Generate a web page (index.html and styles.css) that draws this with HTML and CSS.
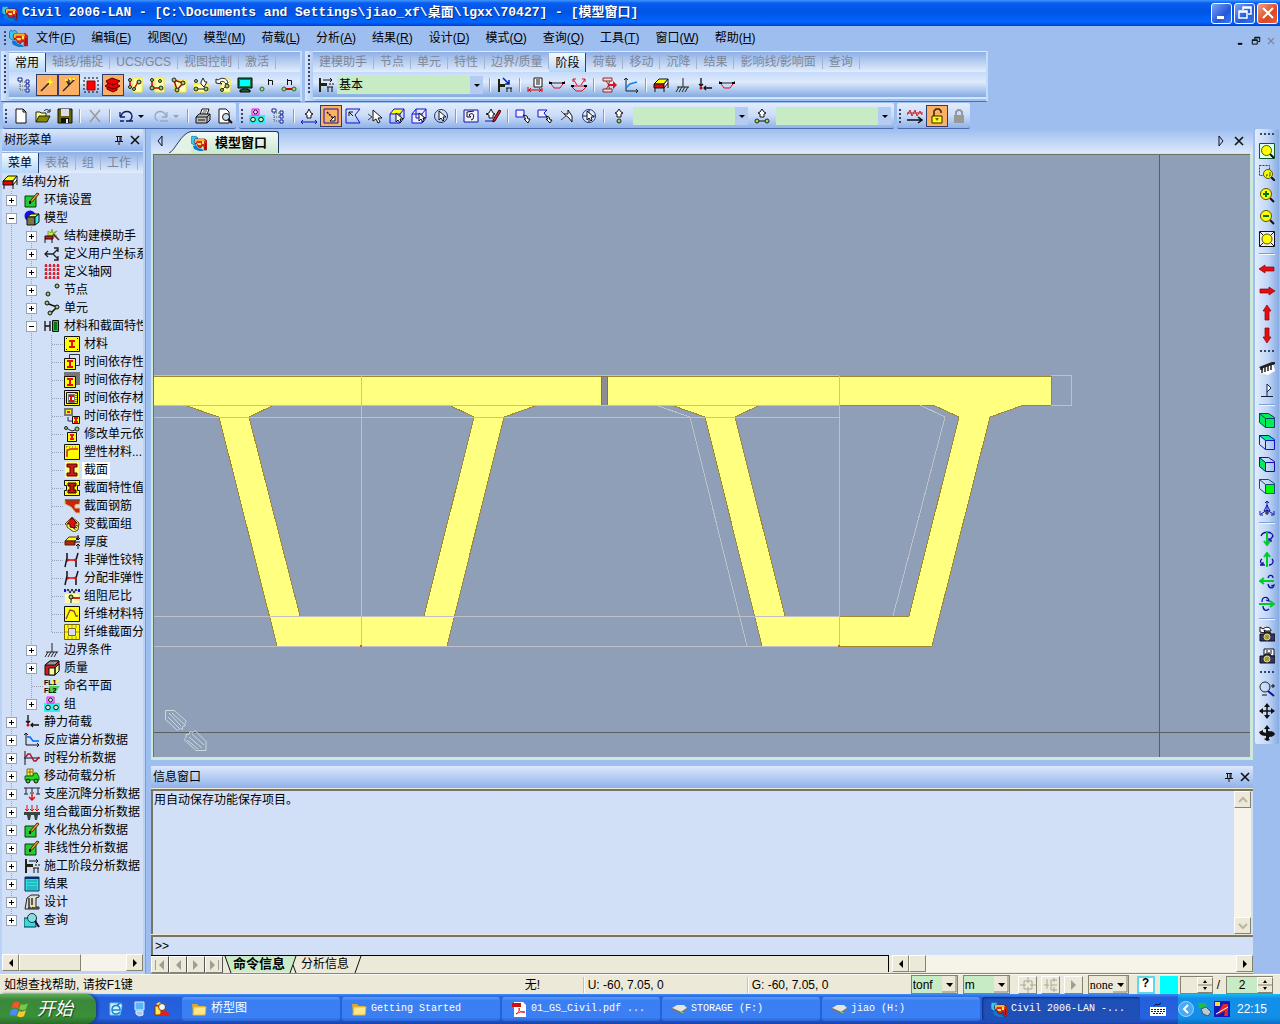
FILE: index.html
```html
<!DOCTYPE html>
<html lang="zh-CN">
<head>
<meta charset="UTF-8">
<meta name="viewport" content="width=device-width, initial-scale=1.0">
<title>Civil 2006-LAN</title>
<link rel="stylesheet" href="styles.css">
</head>
<body>

<!-- Icon sprite, every symbol is on a 16 x 16 grid -->
<svg class="sprite" aria-hidden="true">
    <symbol id="app" viewBox="0 0 16 16"><path d="M1 1l2 1 1-1 2 1 1 2H4L3 7l2 2-2 1-3-2V3z" fill="#38c8f0" stroke="#0858a0" stroke-width=".6"/><path d="M4 4h10l2 2v9h-3v-4h-2l-1 2-3-1-1-3H4z" fill="#e02818" stroke="#701010" stroke-width=".6"/><path d="M4 4h9l1 2H6L5 8H4z" fill="#ffb020"/><path d="M6 8h4v2H7zM11 6h2v3h-2z" fill="#ffe060"/><path d="M2 11l3-1 2 3 4 1 2 2H8l-5-2z" fill="#1078c8"/><path d="M14 8h1v6h-1z" fill="#701010"/></symbol>
    <symbol id="tree" viewBox="0 0 16 16"><path d="M3 5v8h6M3 5h6M3 9h6" fill="none" stroke="#555" stroke-dasharray="1 1"/><path d="M1 1h4v3H1zM9 3h3v3H9zM9 7h3v3H9zM9 12h3v3H9z" fill="#fff" stroke="#0a1e96"/></symbol>
    <symbol id="wand" viewBox="0 0 16 16"><path d="M2 14l9-9" stroke="#222" stroke-width="1.5"/><path d="M11 1l1 3 3 1-3 1-1 3-1-3-3-1 3-1z" fill="#ff0"/></symbol>
    <symbol id="wand2" viewBox="0 0 16 16"><path d="M2 14l7-7 5-5M8 8L5 3M8 8V2" stroke="#222" fill="none" stroke-width="1.3"/><path d="M4 2h2v2H4zM8 1h2v2H8zM12 1h2v2h-2z" fill="#ff0"/></symbol>
    <symbol id="selall" viewBox="0 0 16 16"><path d="M4 4h8v9H4z" fill="#f00" stroke="#900"/><path d="M1 1h14v14H1z" fill="none" stroke="#000" stroke-dasharray="2 2"/></symbol>
    <symbol id="redbox" viewBox="0 0 16 16"><path d="M1 4l6-3 8 3-3 2v1l3 2-3 2v2l-4 2-6-3v-2l-2-1 3-2z" fill="#e00" stroke="#500"/><path d="M3 6l5 2 5-2M3 10l5 2 5-2" fill="none" stroke="#500"/></symbol>
    <symbol id="n1" viewBox="0 0 16 16"><path d="M6 1h9v14H6z" fill="#ffffb0" stroke="#fe0"/><path d="M3 3v6M11 5l-4 7" stroke="#d00" stroke-width="1.5"/><g fill="#9c6" stroke="#222"><circle cx="3" cy="3" r="1.5"/><circle cx="3" cy="10" r="1.5"/><circle cx="12" cy="5" r="2"/><circle cx="7" cy="12" r="1.5"/></g></symbol>
    <symbol id="n2" viewBox="0 0 16 16"><path d="M6 1h9v14H6z" fill="#ffffb0" stroke="#fe0"/><path d="M3 3v8h9" stroke="#d00" fill="none" stroke-width="1.5"/><g fill="#9c6" stroke="#222"><circle cx="3" cy="3" r="1.5"/><circle cx="3" cy="11" r="2"/><circle cx="12" cy="11" r="2"/><circle cx="11" cy="4" r="1.5"/></g></symbol>
    <symbol id="n3" viewBox="0 0 16 16"><path d="M4 3h11v12H4z" fill="#ffffb0" stroke="#fe0"/><path d="M3 3l9 3-6 7z" stroke="#b00" fill="none" stroke-width="1.5"/><g fill="#9c6" stroke="#222"><circle cx="3" cy="3" r="2"/><circle cx="12" cy="6" r="2"/><circle cx="6" cy="13" r="2"/></g></symbol>
    <symbol id="n4" viewBox="0 0 16 16"><path d="M1 7h14v8H1z" fill="#ffffb0" stroke="#fe0"/><path d="M8 7V5l2-4 2 4h2l-3 5-3-3zM4 12h8" fill="#fff" stroke="#222"/><g fill="#9c6" stroke="#222"><circle cx="3" cy="4" r="1.5"/><circle cx="3" cy="12" r="2"/><circle cx="13" cy="12" r="2"/></g></symbol>
    <symbol id="n5" viewBox="0 0 16 16"><path d="M6 2h9v13H6z" fill="#ffffb0" stroke="#fe0"/><path d="M1 6V2l2 1c4-3 9-2 10 3l-2 1C9 4 7 4 5 5l2 2z" fill="#fff" stroke="#222"/><path d="M7 13l5-5" stroke="#d00"/><g fill="#9c6" stroke="#222"><circle cx="7" cy="13" r="1.5"/><circle cx="12" cy="9" r="2"/></g></symbol>
    <symbol id="monitor" viewBox="0 0 16 16"><path d="M1 1h14v10H1z" fill="#084" stroke="#000"/><path d="M3 3h10v6H3z" fill="#0ff"/><path d="M5 12h6v1h2v2H3v-2h2z" fill="#263" stroke="#000"/></symbol>
    <symbol id="nnum" viewBox="0 0 16 16"><circle cx="3" cy="12" r="2" fill="#ad6" stroke="#263"/><path d="M9.500 8V2m0 1.500h4V8" fill="none" stroke="#111"/></symbol>
    <symbol id="enum" viewBox="0 0 16 16"><path d="M3 12h10" stroke="#d00" stroke-width="2"/><g fill="#ad6" stroke="#263"><circle cx="3" cy="12" r="2"/><circle cx="13" cy="12" r="2"/></g><path d="M6.500 8V2m0 1.500h4V8" fill="none" stroke="#111"/></symbol>
    <symbol id="stage" viewBox="0 0 16 16"><path d="M1 1h2v14H1zM3 6h6v3H3z" fill="#221"/><path d="M5 3h9m-2-2l2 2-2 2M9 10h6M10 10v5M14 10v5M12 6v2M15 6v2" fill="none" stroke="#111"/></symbol>
    <symbol id="stage2" viewBox="0 0 16 16"><path d="M1 2h2v13H1zM3 7h5v3H3z" fill="#221"/><path d="M9 11h6M10 11v4M14 11v4" fill="none" stroke="#111"/><path d="M6 1l6 6m0-4v4H8" stroke="#02a" fill="none" stroke-width="1.5"/></symbol>
    <symbol id="s1" viewBox="0 0 16 16"><path d="M7 1h8v9H7zM9 3h4M9 5h4M9 7h4" fill="#fff" stroke="#111"/><path d="M1 10v5M15 11v4M1 13h14M4 11l-2 2 2 2M12 11l2 2-2 2" fill="none" stroke="#d00"/></symbol>
    <symbol id="s2" viewBox="0 0 16 16"><path d="M0 6h16" stroke="#222"/><path d="M0 4l5 7h6l5-7" stroke="#e01020" fill="none"/><path d="M0 5h3v2H0zM13 5h3v2h-3z"/></symbol>
    <symbol id="s3" viewBox="0 0 16 16"><path d="M0 9h16M0 9l5 5h6l5-5M6 8L2 2m0 3V2h3M10 8l4-6m-3 0h3v3" stroke="#e01020" fill="none"/><path d="M0 8h3v2H0zM13 8h3v2h-3z"/></symbol>
    <symbol id="s4" viewBox="0 0 16 16"><path d="M2 1h9v3H2zM2 12h9v3H2zM5 4l3 4-3 4M9 4L7 8l2 4" fill="#edd" stroke="#922"/><path d="M8 7h4V4l4 4-4 4V9H8z" fill="#e01020"/></symbol>
    <symbol id="s5" viewBox="0 0 16 16"><path d="M3 1v13h12M1 3l2-2 2 2M13 12l2 2-2 2" fill="none" stroke="#123"/><path d="M3 11l4-4 7-2" fill="none" stroke="#08f" stroke-width="1.5"/></symbol>
    <symbol id="struct" viewBox="0 0 16 16"><path d="M1 7l5-5h9l-4 5z" fill="#ff0" stroke="#111"/><path d="M1 7h10v4H1z" fill="#e00" stroke="#111"/><path d="M11 7l4-5v4l-4 5zM2 11v4M11 11v4M15 6v5" fill="#fff" stroke="#111"/></symbol>
    <symbol id="support" viewBox="0 0 16 16"><path d="M8 1v9M2 10h12M4 10l-3 5M7 10l-3 5M10 10l-3 5M13 10l-3 5" fill="none" stroke="#222"/></symbol>
    <symbol id="load" viewBox="0 0 16 16"><path d="M4 1v8M2 7l2 2 2-2M15 11H7m2-2l-2 2 2 2" fill="none" stroke="#111" stroke-width="1.3"/><circle cx="4" cy="11" r="1.5" fill="#d00"/></symbol>
    <symbol id="new" viewBox="0 0 16 16"><path d="M3 1h7l3 3v11H3zM10 1v3h3" fill="#fff" stroke="#111"/></symbol>
    <symbol id="open" viewBox="0 0 16 16"><path d="M1 14V4h4l1 1h5v3" fill="#ff9" stroke="#221"/><path d="M1 14l3-6h11l-3 6z" fill="#880" stroke="#221"/><path d="M9 3c2-2 4-2 5 0m1-2v3h-3" fill="none" stroke="#111"/></symbol>
    <symbol id="save" viewBox="0 0 16 16"><path d="M1 1h14v14H1z" fill="#660" stroke="#111"/><path d="M4 1h8v7H4z" fill="#dde"/><path d="M4 10h8v5H4z" fill="#111"/><path d="M9 11h2v4H9z" fill="#eee"/></symbol>
    <symbol id="del" viewBox="0 0 16 16"><path d="M3 2l10 12M13 2L3 14" stroke="#9a9a9c" stroke-width="1.5"/></symbol>
    <symbol id="undo" viewBox="0 0 16 16"><path d="M2 9V4m0 5h5M3 8c2-6 10-6 11 0 0 2-1 4-3 5M2 13h4m2 0h7" fill="none" stroke="#101860" stroke-width="1.3"/></symbol>
    <symbol id="redo" viewBox="0 0 16 16"><path d="M14 9V4m0 5H9M13 8C11 2 3 2 2 8c0 2 1 4 3 5m2 0h8" fill="none" stroke="#9aa8c0" stroke-width="1.3"/></symbol>
    <symbol id="print" viewBox="0 0 16 16"><path d="M5 7l2-6h7l-2 6" fill="#fff" stroke="#111"/><path d="M8 3h4M7 5h4" stroke="#555"/><path d="M1 9l3-3h11v6l-3 3H1z" fill="#bbb" stroke="#111"/><path d="M1 9h11v6M12 9l3-3M3 12h7" fill="none" stroke="#111"/></symbol>
    <symbol id="preview" viewBox="0 0 16 16"><path d="M2 1h7l3 3v11H2z" fill="#fff" stroke="#111"/><circle cx="9" cy="9" r="3.5" fill="#cde" stroke="#111"/><path d="M11 11l4 4" stroke="#111" stroke-width="2"/></symbol>
    <symbol id="group" viewBox="0 0 16 16"><path d="M0 7h16v9H0z" fill="#3ee"/><path d="M3 1h7v6H3z" fill="#fcf" stroke="#f0f"/><g fill="#cec" stroke="#111"><circle cx="6.5" cy="4" r="2"/><circle cx="4" cy="11.5" r="2.3"/><circle cx="12" cy="11.5" r="2.3"/></g></symbol>
    <symbol id="handx" viewBox="0 0 16 16"><path d="M6 10V7L4 6l2-1 2-4 2 4 2 1-2 1v3z" fill="#fff" stroke="#111"/><path d="M0 14h16M2 12l-2 2 2 2M14 12l2 2-2 2" fill="none" stroke="#11c"/></symbol>
    <symbol id="selwin" viewBox="0 0 16 16"><path d="M1 1h14v14H1z" fill="none" stroke="#11a"/><path d="M4 4l6 6" stroke="#111" stroke-width="1.5" stroke-dasharray="2 1"/><path d="M12 8v5H7z" fill="#fff" stroke="#111"/></symbol>
    <symbol id="selpoly" viewBox="0 0 16 16"><path d="M1 1h14l-5 6 5 8H1z" fill="none" stroke="#11c"/><path d="M4 8V4h4M4 4l4 4" fill="none" stroke="#111"/></symbol>
    <symbol id="arrow" viewBox="0 0 16 16"><path d="M1 6l4 3M1 12l4-3" stroke="#444"/><path d="M6 2v11l3-2 2 4 2-1-2-4h4z" fill="#fff" stroke="#111"/></symbol>
    <symbol id="selplane" viewBox="0 0 16 16"><path d="M1 6l4-5h10l-4 5z" fill="#ff0"/><path d="M1 6l4-5h10v9l-4 5H1zM1 6h10v9M11 6l4-5" fill="none" stroke="#11c"/><path d="M7 5v9l2-2 2 3 1-1-1-3h3z" fill="#fff" stroke="#111"/></symbol>
    <symbol id="selvol" viewBox="0 0 16 16"><path d="M1 6l4-5h10v9l-4 5H1zM1 6h10v9M11 6l4-5M5 1v9h10" fill="#e8eeff" stroke="#11c"/><path d="M8 5v8l2-2 2 3 1-1-1-3h2z" fill="#fff" stroke="#111"/></symbol>
    <symbol id="selcirc" viewBox="0 0 16 16"><circle cx="8" cy="8" r="6.5" fill="none" stroke="#236"/><path d="M6 3v9l2-2 2 3 1-1-1-3h3z" fill="#fff" stroke="#111"/></symbol>
    <symbol id="selprev" viewBox="0 0 16 16"><path d="M1 2h14v12H1z" fill="#eef" stroke="#11a"/><path d="M4 4v5h4L6 7c3-3 6-1 4 4l-2 1M4 4l7-1" fill="none" stroke="#111"/></symbol>
    <symbol id="redraw" viewBox="0 0 16 16"><path d="M4 10V7L1 6l3-1 2-4 2 4 2 1-2 1v3z" fill="#fff" stroke="#111"/><path d="M0 13h9" stroke="#11c"/><path d="M14 2l2 1-6 10-2 1v-2z" fill="#c22" stroke="#400"/></symbol>
    <symbol id="unwin" viewBox="0 0 16 16"><path d="M1 2h8v7H1z" fill="#eef" stroke="#11c"/><path d="M8 7l4 1 1 3h2l-2 4-4-4h2z" fill="#fff" stroke="#111"/></symbol>
    <symbol id="unpoly" viewBox="0 0 16 16"><path d="M1 2h9L7 5l3 4H1z" fill="#eef" stroke="#11c"/><path d="M9 8l3 1 1 3h2l-2 3-4-4h2z" fill="#fff" stroke="#111"/></symbol>
    <symbol id="unline" viewBox="0 0 16 16"><path d="M2 3l4 4M2 12l5-4" stroke="#444"/><path d="M5 6h4V2l4 6v6l-3-4z" fill="#fff" stroke="#111"/></symbol>
    <symbol id="uncirc" viewBox="0 0 16 16"><circle cx="8" cy="8" r="6.5" fill="#def" stroke="#236"/><path d="M2 8h12M8 2v12" stroke="#11a"/><path d="M6 3v9l2-2 2 3 1-1-1-3h3z" fill="#fff" stroke="#111"/></symbol>
    <symbol id="handn" viewBox="0 0 16 16"><path d="M6 9V6L4 5l2-1 2-3 2 3 2 1-2 1v3z" fill="#fff" stroke="#111"/><circle cx="8" cy="13" r="2" fill="#9d5" stroke="#222"/></symbol>
    <symbol id="hande" viewBox="0 0 16 16"><path d="M6 9V6L4 5l2-1 2-3 2 3 2 1-2 1v3zM3 13h10" fill="#fff" stroke="#111"/><g fill="#9d5" stroke="#222"><circle cx="3" cy="13" r="2"/><circle cx="13" cy="13" r="2"/></g></symbol>
    <symbol id="wave" viewBox="0 0 16 16"><path d="M0 7l3-5 2 6 3-6 2 6 3-5 2 4M0 5h16" fill="none" stroke="#c22"/><path d="M0 12h14m-3-3l4 3-4 3" fill="none" stroke="#111" stroke-width="1.5"/></symbol>
    <symbol id="unlock" viewBox="0 0 16 16"><path d="M5 8V3l2-2h3l2 2v2" fill="none" stroke="#321" stroke-width="1.5"/><path d="M3 8h10v7H3z" fill="#ff0" stroke="#321"/><path d="M6 10h4l-2 3z" fill="#760"/></symbol>
    <symbol id="lock" viewBox="0 0 16 16"><path d="M5 7V4l2-2h2l2 2v3" fill="none" stroke="#999" stroke-width="2"/><path d="M3 7h10v8H3z" fill="#999"/></symbol>

    <symbol id="env" viewBox="0 0 16 16"><path d="M1 4h11v11H1z" fill="#2c3" stroke="#131"/><path d="M6 11l1-3 6-7 2 1-6 7z" fill="#f92" stroke="#430"/><path d="M5 9h2v3H5z"/></symbol>
    <symbol id="model" viewBox="0 0 16 16"><circle cx="6" cy="6" r="5.5" fill="#11e"/><path d="M3 7l4-3h8l-4 3z" fill="#ff3" stroke="#111"/><path d="M3 7h8v8H3z" fill="#774" stroke="#111"/><path d="M11 7l4-3v8l-4 3z" fill="#4ee" stroke="#111"/></symbol>
    <symbol id="wizard" viewBox="0 0 16 16"><path d="M4 3l3 2 1-4 1 4 4-2-3 3 3 2H4z" fill="#be4" stroke="#7a3"/><path d="M1 8h8v3H1zM1 11v4M8 11v4" fill="#e11" stroke="#111"/><path d="M9 6l6 6" stroke="#612" stroke-width="1.5"/></symbol>
    <symbol id="ucs" viewBox="0 0 16 16"><path d="M1 8h8l5-5M9 8l5 5M4 5L1 8l3 3M10 2h4v4M10 14h4v-4" fill="none" stroke="#222" stroke-width="1.3"/></symbol>
    <symbol id="grid" viewBox="0 0 16 16"><path d="M0 2h16M0 6h16M0 10h16M0 14h16" stroke="#889"/><path d="M2 0v16M6 0v16M10 0v16M14 0v16" stroke="#d23" stroke-width="2" stroke-dasharray="3 1"/></symbol>
    <symbol id="node" viewBox="0 0 16 16"><g fill="#9c7" stroke="#111"><circle cx="13" cy="4" r="2"/><circle cx="4" cy="12" r="2"/></g></symbol>
    <symbol id="elem" viewBox="0 0 16 16"><path d="M2 3l11 4-6 6" fill="none" stroke="#111" stroke-width="1.5"/><g fill="#9c7" stroke="#111"><circle cx="3" cy="3" r="2"/><circle cx="13" cy="7" r="2"/><circle cx="6" cy="13" r="2"/></g></symbol>
    <symbol id="prop" viewBox="0 0 16 16"><path d="M1 3v10M6 3v10M1 8h5" stroke="#111" stroke-width="1.3"/><path d="M8.500 2.500h6v11h-6z" fill="#1c3" stroke="#111"/><path d="M10 5h3M10 7h3M10 9h3M10 11h3" stroke="#020"/></symbol>
    <symbol id="mat" viewBox="0 0 16 16"><path d="M.5.5h15v15H.5z" fill="#ff0" stroke="#111"/><path d="M5 4h6v2H9v4h2v2H5v-2h2V6H5z" fill="#e01010"/><path d="M2 2h1v1H2zM13 2h1v1h-1zM2 13h1v1H2zM13 13h1v1h-1z"/></symbol>
    <symbol id="mat2" viewBox="0 0 16 16"><path d="M5.500.5h10v11h-10z" fill="#ddf" stroke="#333"/><path d="M.5 4.500h11v11H.5z" fill="#ff0" stroke="#111"/><path d="M3 6h6v2H7v4h2v2H3v-2h2V8H3z" fill="#e01010"/></symbol>
    <symbol id="mat3" viewBox="0 0 16 16"><path d="M0 0h16v13H0z" fill="#777"/><path d="M.5 4.500h11v11H.5z" fill="#ff0" stroke="#111"/><path d="M3 6h6v2H7v4h2v2H3v-2h2V8H3z" fill="#e01010"/></symbol>
    <symbol id="mat4" viewBox="0 0 16 16"><path d="M.5.5h15v15H.5z" fill="#ff0" stroke="#111"/><path d="M2.500 2.500h11v11h-11z" fill="none" stroke="#111"/><path d="M4.500 4.500h6v8h-6z" fill="#fff" stroke="#777"/><path d="M5 5h5v2H8v3h2v2H5v-2h1V7H5z" fill="#e01010"/><path d="M12 3v10" stroke="#111" stroke-dasharray="1 1"/></symbol>
    <symbol id="mat5" viewBox="0 0 16 16"><path d="M1 1h7v6H1z" fill="#ff0" stroke="#777" stroke-width="2"/><path d="M3 3h3v2H3z" fill="#e11"/><path d="M8.500 8.500h7v7h-7z" fill="#ff0" stroke="#111"/><path d="M11 10h2v4h-2zM10 9h4v2h-4zM10 13h4v2h-4z" fill="#e11"/><path d="M4 9v4h4" stroke="#226" fill="none"/></symbol>
    <symbol id="mat6" viewBox="0 0 16 16"><path d="M2 2l6 3 6-2" fill="none" stroke="#222"/><g fill="#9c7" stroke="#222"><circle cx="2" cy="2" r="1.5"/><circle cx="13" cy="3" r="2"/></g><path d="M3.500 6.500h9v9h-9z" fill="#ff0" stroke="#111"/><path d="M6 8h4v2H9v2h1v2H6v-2h1v-2H6z" fill="#e11"/></symbol>
    <symbol id="plast" viewBox="0 0 16 16"><path d="M.5.5h15v15H.5z" fill="#ff0" stroke="#111"/><path d="M3 13V7l3-2h8" fill="none" stroke="#d22" stroke-width="1.5"/><path d="M3 2v12M2 3h12" stroke="#762" stroke-dasharray="1 2"/></symbol>
    <symbol id="sect" viewBox="0 0 16 16"><path d="M1 0h14v16H1z" fill="#ff8"/><path d="M3 2h10v3h-3v6h3v3H3v-3h3V5H3z" fill="#d01818" stroke="#500"/></symbol>
    <symbol id="sect2" viewBox="0 0 16 16"><path d="M.5.5h15v5h-2v5h2v5H.5v-5h2v-5h-2z" fill="#ff0" stroke="#111"/><path d="M4 3h8v3h-2v4h2v3H4v-3h2V6H4z" fill="#c01010" stroke="#300"/></symbol>
    <symbol id="rebar" viewBox="0 0 16 16"><path d="M1 2h15v4l-5 1v3h5v5h-4L7 9 1 6z" fill="#d02010" stroke="#cc6"/><path d="M1 2h15" stroke="#400"/></symbol>
    <symbol id="taper" viewBox="0 0 16 16"><path d="M8 1l7 6-1 7-4 2-3-2-4-3v-2L1 8z" fill="#ff6" stroke="#640"/><path d="M8 2l5 5h-2v5l-5-1V8H3z" fill="#e01010" stroke="#500"/><path d="M10 13l4-5" stroke="#333" stroke-dasharray="1 1" stroke-width="3"/></symbol>
    <symbol id="thick" viewBox="0 0 16 16"><path d="M1 7l4-4h10l-4 4z" fill="#ff0" stroke="#520"/><path d="M1 7h10v4H1z" fill="#b21" stroke="#520"/><path d="M14 1v5m-2-2l2 2 2-2M14 15v-5m-2 2l2-2 2 2M10 8h6" stroke="#111" fill="none"/></symbol>
    <symbol id="hinge" viewBox="0 0 16 16"><path d="M3 1v5L1 15M14 1l-2 7v7" fill="none" stroke="#111" stroke-width="1.5"/><path d="M3 8h10" stroke="#e01010" stroke-width="1.5"/><path d="M3 6l3 2-3 2zM12 6l-3 2 3 2z" fill="#e01010"/></symbol>
    <symbol id="damp" viewBox="0 0 16 16"><path d="M1 6h14v9H1z" fill="#ffa"/><path d="M3 3l1-2 2 4 2-4 2 4 2-4 1 2" fill="none" stroke="#111"/><path d="M0 1h2v3H0zM14 1h2v3h-2z" fill="#11d"/><path d="M8 9h8v2H8z" fill="#d22"/><path d="M7 10v5" stroke="#111"/><circle cx="7" cy="9" r="2" fill="#9c7" stroke="#111"/></symbol>
    <symbol id="fib1" viewBox="0 0 16 16"><path d="M.5.5h15v15H.5z" fill="#ff0" stroke="#111"/><path d="M2 13l4-9 4 1 2 5h2" fill="none" stroke="#843" stroke-width="1.3"/></symbol>
    <symbol id="fib2" viewBox="0 0 16 16"><path d="M.5.5h15v15H.5z" fill="#ff0" stroke="#760"/><path d="M4.500 4.500h7v7h-7z" fill="#d2e0f7" stroke="#863"/><path d="M8 1v3M8 12v3M1 8h3M12 8h3M4 1v3M12 1v3M4 12v3M12 12v3" stroke="#a93"/></symbol>
    <symbol id="mass" viewBox="0 0 16 16"><path d="M1 5l5-4h9v9l-4 5H1z" fill="#d01820" stroke="#111"/><path d="M1 5l5-4h9l-4 4z" fill="#999" stroke="#111"/><path d="M5 8h6v7H5zM11 8l4-4v7l-4 4z" fill="#ef9" stroke="#111"/></symbol>
    <symbol id="spectrum" viewBox="0 0 16 16"><path d="M2 1v12h13M0 3l2-2 2 2M13 11l2 2-2 2" fill="none" stroke="#112"/><path d="M3 5h3l3 4h6" fill="none" stroke="#06f" stroke-width="1.5"/></symbol>
    <symbol id="time" viewBox="0 0 16 16"><path d="M1 1v14M0 8h16" stroke="#111"/><path d="M1 8l3-4h2l4 7h2l3-4" fill="none" stroke="#b11328" stroke-width="1.5"/></symbol>
    <symbol id="car" viewBox="0 0 16 16"><path d="M3 1h6v7H3zM6 1v6M3 4h6" fill="#fe3" stroke="#863"/><path d="M1 8h8l1-3h3l2 4v3H1z" fill="#2d2" stroke="#161"/><circle cx="4" cy="13" r="2" fill="#2d2" stroke="#111"/><circle cx="12" cy="13" r="2" fill="#2d2" stroke="#111"/></symbol>
    <symbol id="settle" viewBox="0 0 16 16"><path d="M0 2h16M2 2v6M8 2v4M14 2v6M0 8h4M6 7h4M12 8h4" stroke="#222"/><path d="M8 8v6m-3-3l3 3 3-3" fill="none" stroke="#d11" stroke-width="1.5"/></symbol>
    <symbol id="comp" viewBox="0 0 16 16"><path d="M3 1v6M8 1v6M13 1v6M1 5l2 2 2-2M6 5l2 2 2-2M11 5l2 2 2-2" fill="none" stroke="#d11"/><path d="M0 8h16v3H0zM3 11h4l-1 5H4zM10 11h4l-1 5h-2z" fill="#354540"/></symbol>
    <symbol id="result" viewBox="0 0 16 16"><path d="M1 1h14v14H1z" fill="#3dd" stroke="#036"/><path d="M1 2h14" stroke="#036" stroke-width="2"/><path d="M3 5h10M3 8h10M3 11h10M3 13h10" stroke="#178" stroke-width=".7"/></symbol>
    <symbol id="design" viewBox="0 0 16 16"><path d="M1 15l2-11 4-3h8v2l-3 1v9h3v2z" fill="#ddc" stroke="#222"/><path d="M5 4v10M8 4v10M4 14h10" stroke="#333" stroke-width="1.5"/><path d="M7 11h4l-4 3z" fill="#fe3"/></symbol>
    <symbol id="query" viewBox="0 0 16 16"><path d="M0 6h12v9H0z" fill="#3dd" stroke="#134"/><circle cx="8" cy="6" r="4.5" fill="#8dd" stroke="#134"/><path d="M11 9l4 6" stroke="#113" stroke-width="2"/></symbol>

    <symbol id="zfit" viewBox="0 0 16 16"><path d="M.5.5h15v15H.5z" fill="#dfe" stroke="#153"/><path d="M11 11l4 4" stroke="#111" stroke-width="2"/><circle cx="7.5" cy="7.5" r="5" fill="#ff0" stroke="#550"/></symbol>
    <symbol id="zwin" viewBox="0 0 16 16"><path d="M.5.5h10v10H.5z" fill="none" stroke="#153" stroke-dasharray="2 1"/><path d="M12 12l4 4" stroke="#111" stroke-width="2"/><circle cx="9" cy="9" r="4.5" fill="#ff0" stroke="#550"/><path d="M7 11h1V9m2 2h1V7" stroke="#350" fill="none"/></symbol>
    <symbol id="zin" viewBox="0 0 16 16"><path d="M11 11l4 4" stroke="#111" stroke-width="2"/><circle cx="7" cy="7" r="5.5" fill="#ff0" stroke="#550"/><path d="M4 7h6M7 4v6" stroke="#070" stroke-width="2"/></symbol>
    <symbol id="zout" viewBox="0 0 16 16"><path d="M11 11l4 4" stroke="#111" stroke-width="2"/><circle cx="7" cy="7" r="5.5" fill="#ff0" stroke="#550"/><path d="M4 7h6" stroke="#070" stroke-width="2"/></symbol>
    <symbol id="zauto" viewBox="0 0 16 16"><path d="M.5.5h15v15H.5zM1 1l14 14M15 1L1 15" fill="#eef" stroke="#111"/><circle cx="8" cy="8" r="5" fill="#ff0" stroke="#550"/></symbol>
    <symbol id="left" viewBox="0 0 16 16"><path d="M0 8l6-4v2h9v4H6v2z" fill="#e80c0c" stroke="#801" stroke-width=".7"/></symbol>
    <symbol id="right" viewBox="0 0 16 16"><path d="M16 8l-6-4v2H1v4h9v2z" fill="#e80c0c" stroke="#801" stroke-width=".7"/></symbol>
    <symbol id="up" viewBox="0 0 16 16"><path d="M8 0l4 6h-2v9H6V6H4z" fill="#e80c0c" stroke="#801" stroke-width=".7"/></symbol>
    <symbol id="down" viewBox="0 0 16 16"><path d="M8 16l4-6h-2V1H6v9H4z" fill="#e80c0c" stroke="#801" stroke-width=".7"/></symbol>
    <symbol id="bridge" viewBox="0 0 16 16"><path d="M1 8l13-5 2 8-7 4-8-2z" fill="#fff"/><path d="M0 7l13-5h3v2L2 9z" fill="#222"/><path d="M3 8v5M6 7v5M9 6v5M12 5v5M1 9h3M11 4h4" stroke="#222" stroke-width="1.5"/></symbol>
    <symbol id="flag" viewBox="0 0 16 16"><path d="M2 14.500h12M8 14V2l4 4-4 4" fill="#fff" stroke="#124"/></symbol>
    <symbol id="iso" viewBox="0 0 16 16"><path d="M.5 1.500h9l6 4v10h-9l-6-5z" fill="#0e5" stroke="#123a70"/><path d="M6.500 15V6.500h9M.5 1.500l6 5" fill="none" stroke="#123a70"/></symbol>
    <symbol id="top" viewBox="0 0 16 16"><path d="M0 1h10l6 5H6z" fill="#0e8"/><path d="M.5 1.500h9l6 4v10h-9l-6-5zM6.500 15V6.500h9M.5 1.500l6 5" fill="none" stroke="#11c"/></symbol>
    <symbol id="lside" viewBox="0 0 16 16"><path d="M0 1l6 5v9l-6-5z" fill="#0e5"/><path d="M.5 1.500h9l6 4v10h-9l-6-5zM6.500 15V6.500h9M.5 1.500l6 5" fill="none" stroke="#11a"/></symbol>
    <symbol id="front" viewBox="0 0 16 16"><path d="M6 6h10v10H6z" fill="#0f0"/><path d="M.5 1.500h9l6 4v10h-9l-6-5zM6.500 15V6.500h9M.5 1.500l6 5" fill="none" stroke="#124a80"/></symbol>
    <symbol id="persp" viewBox="0 0 16 16"><path d="M8 1v9l6 4M8 10l-6 4M6 3l2-2 2 2M8 5l3 6H5zM1 11v4h3M15 11v4h-3" fill="none" stroke="#11b"/><path d="M8 10v5M6 13h4" stroke="#111"/></symbol>
    <symbol id="rdown" viewBox="0 0 16 16"><path d="M2 6c2-5 11-5 12 0l-3 4m-1-2v3h3" fill="none" stroke="#11a" stroke-width="1.3"/><path d="M8 1v13M5 11l3 4 3-4" fill="none" stroke="#0c2" stroke-width="2"/></symbol>
    <symbol id="rup" viewBox="0 0 16 16"><path d="M3 7c-3 2-1 6 3 6M10 13c4 0 5-4 3-6M4 10v3H1" fill="none" stroke="#11a" stroke-width="1.3"/><path d="M8 15V2M5 5l3-4 3 4" fill="none" stroke="#0c2" stroke-width="2"/></symbol>
    <symbol id="rleft" viewBox="0 0 16 16"><path d="M9 4c1-4 5-3 5 0M9 10c1 5 5 5 6 1l-3 1" fill="none" stroke="#11a" stroke-width="1.3"/><path d="M15 7H2M5 4L1 7l4 3" fill="none" stroke="#0c2" stroke-width="2"/></symbol>
    <symbol id="rright" viewBox="0 0 16 16"><path d="M3 6c0-6 6-6 7-1L7 4M4 10c0 5 4 5 6 3" fill="none" stroke="#11a" stroke-width="1.3"/><path d="M0 8h13M11 5l4 3-4 3" fill="none" stroke="#0c2" stroke-width="2"/></symbol>
    <symbol id="cam" viewBox="0 0 16 16"><path d="M1 6V1l3 2c3-3 8-2 8 2H7L5 4l1 3z" fill="#fff" stroke="#111"/><path d="M1 8h4l1-2h5l1 2h4v7H1z" fill="#336" stroke="#111"/><circle cx="8" cy="11" r="3" fill="#a93" stroke="#dd8"/></symbol>
    <symbol id="cam2" viewBox="0 0 16 16"><path d="M5 1h10v7H5zM7 3h2M11 3h2M7 5h6" fill="#fff" stroke="#111"/><path d="M1 8h4l1-2h5l1 2h4v7H1z" fill="#336" stroke="#111"/><circle cx="8" cy="11" r="3" fill="#a93" stroke="#dd8"/></symbol>
    <symbol id="zdyn" viewBox="0 0 16 16"><circle cx="6" cy="6" r="5" fill="none" stroke="#222"/><path d="M9 10l6 5" stroke="#11a" stroke-width="2"/><path d="M12 5h4M14 3v4M3 14h5" stroke="#111"/></symbol>
    <symbol id="pan" viewBox="0 0 16 16"><path d="M8 1v14M1 8h14" stroke="#111" stroke-width="1.5"/><path d="M8 0l3 4H5zM8 16l3-4H5zM0 8l4-3v6zM16 8l-4-3v6z" fill="#111"/></symbol>
    <symbol id="rot" viewBox="0 0 16 16"><path d="M8 0l3 4H9v2c4 0 6 1 7 3-1 2-3 3-6 3v2l1 1-3 1-3-2 2-1v-2C4 11 1 10 0 7l4-2v2l3 1V4H5z" fill="#111"/></symbol>

    <symbol id="pin" viewBox="0 0 16 16"><path d="M5 4.500h6M6.500 4v5M9 4v5M10 4v5M4 9.500h8M8 9v4" stroke="#111" fill="none"/></symbol>
    <symbol id="x" viewBox="0 0 16 16"><path d="M4 4l8 8M12 4l-8 8" stroke="#111" stroke-width="1.6"/></symbol>
    <symbol id="min" viewBox="0 0 16 16"><path d="M3 11h7v3H3z" fill="currentColor"/></symbol>
    <symbol id="restore" viewBox="0 0 16 16"><path d="M6 5V2h8v7h-3M6 3h8M2 6h8v7H2zM2 7h8" fill="none" stroke="currentColor" stroke-width="1.5"/></symbol>
    <symbol id="close" viewBox="0 0 16 16"><path d="M3 3l10 10M13 3L3 13" stroke="currentColor" stroke-width="2"/></symbol>
    <symbol id="tl" viewBox="0 0 16 16"><path d="M10 4v8L6 8z" fill="currentColor"/></symbol>
    <symbol id="tr" viewBox="0 0 16 16"><path d="M6 4v8l4-4z" fill="currentColor"/></symbol>
    <symbol id="ol" viewBox="0 0 16 16"><path d="M10 3v10L6 8z" fill="none" stroke="#112"/></symbol>
    <symbol id="or" viewBox="0 0 16 16"><path d="M6 3v10l4-5z" fill="none" stroke="#112"/></symbol>
    <symbol id="first" viewBox="0 0 16 16"><path d="M3 3h1v10H3zM12 3v10L7 8z" fill="currentColor"/></symbol>
    <symbol id="prev" viewBox="0 0 16 16"><path d="M11 3v10L6 8z" fill="currentColor"/></symbol>
    <symbol id="next" viewBox="0 0 16 16"><path d="M5 3v10l5-5z" fill="currentColor"/></symbol>
    <symbol id="last" viewBox="0 0 16 16"><path d="M12 3h1v10h-1zM4 3v10l5-5z" fill="currentColor"/></symbol>
    <symbol id="cu" viewBox="0 0 16 16"><path d="M4 10l4-4 4 4" fill="none" stroke="#b9b6a5" stroke-width="2"/></symbol>
    <symbol id="cd" viewBox="0 0 16 16"><path d="M4 6l4 4 4-4" fill="none" stroke="#b9b6a5" stroke-width="2"/></symbol>
    <symbol id="dd" viewBox="0 0 8 16"><path d="M1 7h6L4 10z" fill="currentColor"/></symbol>
    <symbol id="target" viewBox="0 0 16 16"><path d="M4 4h8v8H4zM8 0v6M8 10v6M0 8h6M10 8h6" fill="none" stroke="#aaa797"/></symbol>
    <symbol id="snap" viewBox="0 0 16 16"><path d="M4 2v10M1 8h5M8 3v10M8 3h6M8 8h6M8 13h6M11 1v4M11 10v5" fill="none" stroke="#aaa797"/></symbol>

    <symbol id="win" viewBox="0 0 20 20"><path d="M3 4c3-2 5-1 7 0L8 10c-2-1-4-2-7 0z" fill="#f0562a"/><path d="M11 5c2 1 4 1 7-1l-2 6c-3 2-5 1-7 0z" fill="#7ac843"/><path d="M1 11c3-2 5-1 7 0l-2 6c-2-1-4-1-7 0z" fill="#4a8cf5"/><path d="M9 12c2 1 4 1 7-1l-2 6c-3 2-5 1-7 0z" fill="#fcc832"/></symbol>
    <symbol id="ie" viewBox="0 0 16 16"><path d="M2 2h11l1 3-2 9H2z" fill="#d8efff" stroke="#6bf"/><path d="M4 9h8c0-6-8-6-8 0 0 5 6 5 8 2M9 4l5-3" fill="none" stroke="#18c" stroke-width="1.5"/></symbol>
    <symbol id="desk" viewBox="0 0 16 16"><path d="M4 1h9v8H4z" fill="#5ab4f8" stroke="#def"/><path d="M5 10h7v4l-4 1-3-2z" fill="#a8c8f0" stroke="#def"/></symbol>
    <symbol id="quick" viewBox="0 0 16 16"><path d="M2 3l3-2 4 2-3 3z" fill="#fc3"/><path d="M1 5h6v9H1z" fill="#fe4" stroke="#a20"/><circle cx="8" cy="6" r="3.5" fill="#dff" stroke="#a20"/><path d="M7 12l4-3 5 4-2 2H4z" fill="#d21"/></symbol>
    <symbol id="folder" viewBox="0 0 16 16"><path d="M1 3h5l2 2h6v9H2z" fill="#d9a92c"/><path d="M3 6h12l-1 8H2z" fill="#ffe88a" stroke="#e8b93c"/></symbol>
    <symbol id="pdf" viewBox="0 0 16 16"><path d="M3 1h9l3 3v12H3z" fill="#fff"/><path d="M1 2h9v4H1z" fill="#c11"/><path d="M5 13c3-2 4-5 3-6 0 4 3 5 6 4-3-1-6 0-9 2z" fill="none" stroke="#e22"/></symbol>
    <symbol id="disk" viewBox="0 0 16 16"><path d="M1 7l5-3h7l3 3-6 4z" fill="#e4e4e0"/><path d="M1 7l9 4 6-4v2l-6 4-9-4z" fill="#777"/><path d="M10 11h3v1h-3z" fill="#5d5"/></symbol>
    <symbol id="kbd" viewBox="0 0 16 16"><path d="M0 6h16v9H0z" fill="#fff"/><path d="M1 8.500h14M1 10.500h14M3 12.500h10" stroke="#123" stroke-dasharray="2 1"/><path d="M4 5l2-2 2 1 3-2" stroke="#111" fill="none"/></symbol>
    <symbol id="chev" viewBox="0 0 16 16"><circle cx="8" cy="8" r="7.5" fill="#4aa8f4" stroke="#9ad4ff"/><path d="M10 4L6 8l4 4" fill="none" stroke="#fff" stroke-width="2"/></symbol>
    <symbol id="usb" viewBox="0 0 16 16"><path d="M2 2h7l2 3-3 3-5-1z" fill="#2b4"/><path d="M5 8l5-2 5 5-3 4-5-2z" fill="#bcc" stroke="#456"/></symbol>
    <symbol id="tray" viewBox="0 0 16 16"><path d="M0 0h16v16H0z" fill="#111ab8"/><path d="M3 14l6-11h5v12h-4l1-5z" fill="#e22"/><path d="M1 1h5v4H1z" fill="#fd3"/><path d="M2 13l12-7" stroke="#fff"/></symbol>
</svg>

<header class="titlebar">
    <svg class="icon"><use href="#app"/></svg>
    <h1>Civil 2006-LAN - [C:\Documents and Settings\jiao_xf\桌面\lgxx\70427] - [模型窗口]</h1>
    <button class="win-btn" aria-label="最小化"><svg class="icon"><use href="#min"/></svg></button>
    <button class="win-btn" aria-label="还原"><svg class="icon"><use href="#restore"/></svg></button>
    <button class="win-btn win-close" aria-label="关闭"><svg class="icon"><use href="#close"/></svg></button>
</header>

<nav class="menubar">
    <span class="grip"></span>
    <svg class="icon logo"><use href="#app"/></svg>
    <a href="#">文件(<u>F</u>)</a>
    <a href="#">编辑(<u>E</u>)</a>
    <a href="#">视图(<u>V</u>)</a>
    <a href="#">模型(<u>M</u>)</a>
    <a href="#">荷载(<u>L</u>)</a>
    <a href="#">分析(<u>A</u>)</a>
    <a href="#">结果(<u>R</u>)</a>
    <a href="#">设计(<u>D</u>)</a>
    <a href="#">模式(<u>O</u>)</a>
    <a href="#">查询(<u>Q</u>)</a>
    <a href="#">工具(<u>T</u>)</a>
    <a href="#">窗口(<u>W</u>)</a>
    <a href="#">帮助(<u>H</u>)</a>
    <div class="mdi">
        <button aria-label="最小化"><svg><use href="#min"/></svg></button>
        <button aria-label="还原"><svg><use href="#restore"/></svg></button>
        <button class="dim" aria-label="关闭"><svg><use href="#close"/></svg></button>
    </div>
</nav>

<div class="bands">
    <section class="band">
        <span class="grip tall"></span>
        <div class="band-body">
            <div class="tabs">
                <button class="tab on">常用</button><button class="tab">轴线/捕捉</button><button class="tab">UCS/GCS</button><button class="tab">视图控制</button><button class="tab">激活</button>
            </div>
            <div class="tools">
                <button class="tb" aria-label="树形菜单"><svg class="icon"><use href="#tree"/></svg></button>
                <button class="tb on" aria-label="节点捕捉"><svg class="icon"><use href="#wand"/></svg></button>
                <button class="tb on" aria-label="单元捕捉"><svg class="icon"><use href="#wand2"/></svg></button>
                <button class="tb" aria-label="全选"><svg class="icon"><use href="#selall"/></svg></button>
                <button class="tb on" aria-label="消隐"><svg class="icon"><use href="#redbox"/></svg></button>
                <button class="tb" aria-label="选择节点"><svg class="icon"><use href="#n1"/></svg></button>
                <button class="tb" aria-label="选择单元"><svg class="icon"><use href="#n2"/></svg></button>
                <button class="tb" aria-label="激活"><svg class="icon"><use href="#n3"/></svg></button>
                <button class="tb" aria-label="钝化"><svg class="icon"><use href="#n4"/></svg></button>
                <button class="tb" aria-label="前次激活"><svg class="icon"><use href="#n5"/></svg></button>
                <button class="tb" aria-label="显示"><svg class="icon"><use href="#monitor"/></svg></button>
                <button class="tb" aria-label="节点号"><svg class="icon"><use href="#nnum"/></svg></button>
                <button class="tb" aria-label="单元号"><svg class="icon"><use href="#enum"/></svg></button>
            </div>
        </div>
    </section>
    <section class="band band-wide">
        <span class="grip tall"></span>
        <div class="band-body">
            <div class="tabs">
                <button class="tab">建模助手</button><button class="tab">节点</button><button class="tab">单元</button><button class="tab">特性</button><button class="tab">边界/质量</button><button class="tab on">阶段</button><button class="tab">荷载</button><button class="tab">移动</button><button class="tab">沉降</button><button class="tab">结果</button><button class="tab">影响线/影响面</button><button class="tab">查询</button>
            </div>
            <div class="tools">
                <button class="tb" aria-label="施工阶段"><svg class="icon"><use href="#stage"/></svg></button>
                <select class="combo stage-combo" aria-label="阶段"><option>基本</option></select>
                <span class="sep"></span>
                <button class="tb" aria-label="定义施工阶段"><svg class="icon"><use href="#stage2"/></svg></button>
                <span class="sep"></span>
                <button class="tb" aria-label="钢束特性"><svg class="icon"><use href="#s1"/></svg></button>
                <button class="tb" aria-label="钢束形状"><svg class="icon"><use href="#s2"/></svg></button>
                <button class="tb" aria-label="钢束预应力"><svg class="icon"><use href="#s3"/></svg></button>
                <span class="sep"></span>
                <button class="tb" aria-label="徐变"><svg class="icon"><use href="#s4"/></svg></button>
                <button class="tb" aria-label="强度发展"><svg class="icon"><use href="#s5"/></svg></button>
                <span class="sep"></span>
                <button class="tb" aria-label="结构组"><svg class="icon"><use href="#struct"/></svg></button>
                <button class="tb" aria-label="边界组"><svg class="icon"><use href="#support"/></svg></button>
                <button class="tb" aria-label="荷载组"><svg class="icon"><use href="#load"/></svg></button>
                <button class="tb" aria-label="钢束组"><svg class="icon"><use href="#s2"/></svg></button>
            </div>
        </div>
    </section>
</div>

<div class="toolrow">
    <div class="strip">
        <span class="grip"></span>
        <button class="tb" aria-label="新建"><svg class="icon"><use href="#new"/></svg></button>
        <button class="tb" aria-label="打开"><svg class="icon"><use href="#open"/></svg></button>
        <button class="tb" aria-label="保存"><svg class="icon"><use href="#save"/></svg></button>
        <span class="sep"></span>
        <button class="tb" aria-label="删除"><svg class="icon"><use href="#del"/></svg></button>
        <span class="sep"></span>
        <button class="tb split" aria-label="撤销"><svg class="icon"><use href="#undo"/></svg><svg class="drop"><use href="#dd"/></svg></button>
        <button class="tb split dim" aria-label="重做"><svg class="icon"><use href="#redo"/></svg><svg class="drop"><use href="#dd"/></svg></button>
        <span class="sep"></span>
        <button class="tb" aria-label="打印"><svg class="icon"><use href="#print"/></svg></button>
        <button class="tb" aria-label="打印预览"><svg class="icon"><use href="#preview"/></svg></button>
    </div>
    <div class="strip">
        <span class="grip"></span>
        <button class="tb" aria-label="组"><svg class="icon"><use href="#group"/></svg></button>
        <button class="tb" aria-label="工作树"><svg class="icon"><use href="#tree"/></svg></button>
        <span class="sep"></span>
        <button class="tb" aria-label="单选"><svg class="icon"><use href="#handx"/></svg></button>
        <button class="tb on" aria-label="窗口选择"><svg class="icon"><use href="#selwin"/></svg></button>
        <button class="tb" aria-label="多边形选择"><svg class="icon"><use href="#selpoly"/></svg></button>
        <button class="tb" aria-label="交叉线选择"><svg class="icon"><use href="#arrow"/></svg></button>
        <button class="tb" aria-label="平面选择"><svg class="icon"><use href="#selplane"/></svg></button>
        <button class="tb" aria-label="立体选择"><svg class="icon"><use href="#selvol"/></svg></button>
        <button class="tb" aria-label="全选"><svg class="icon"><use href="#selcirc"/></svg></button>
        <span class="sep"></span>
        <button class="tb" aria-label="选择前次"><svg class="icon"><use href="#selprev"/></svg></button>
        <button class="tb" aria-label="选择新建"><svg class="icon"><use href="#redraw"/></svg></button>
        <span class="sep"></span>
        <button class="tb" aria-label="窗口解除"><svg class="icon"><use href="#unwin"/></svg></button>
        <button class="tb" aria-label="多边形解除"><svg class="icon"><use href="#unpoly"/></svg></button>
        <button class="tb" aria-label="交叉线解除"><svg class="icon"><use href="#unline"/></svg></button>
        <button class="tb" aria-label="全部解除"><svg class="icon"><use href="#uncirc"/></svg></button>
        <span class="sep"></span>
        <button class="tb" aria-label="节点"><svg class="icon"><use href="#handn"/></svg></button>
        <select class="combo" aria-label="节点编号"><option></option></select>
        <button class="tb" aria-label="单元"><svg class="icon"><use href="#hande"/></svg></button>
        <select class="combo" aria-label="单元编号"><option></option></select>
    </div>
    <div class="strip">
        <span class="grip"></span>
        <button class="tb" aria-label="后处理"><svg class="icon"><use href="#wave"/></svg></button>
        <button class="tb on" aria-label="解锁"><svg class="icon"><use href="#unlock"/></svg></button>
        <button class="tb" aria-label="锁定"><svg class="icon"><use href="#lock"/></svg></button>
    </div>
</div>

<main class="workspace">
    <aside class="side">
        <div class="pane-head">
            <h2>树形菜单</h2>
            <button aria-label="固定"><svg><use href="#pin"/></svg></button>
            <button aria-label="关闭"><svg><use href="#x"/></svg></button>
        </div>
        <div class="tabs side-tabs">
            <button class="tab on">菜单</button><button class="tab">表格</button><button class="tab">组</button><button class="tab">工作</button>
        </div>
        <div class="tree">
            <div class="row root"><svg class="icon"><use href="#struct"/></svg><span>结构分析</span></div>
            <ul>
                <li><div class="row"><i class="ex plus"></i><svg class="icon"><use href="#env"/></svg><span>环境设置</span></div></li>
                <li><div class="row"><i class="ex minus"></i><svg class="icon"><use href="#model"/></svg><span>模型</span></div>
                    <ul>
                        <li><div class="row"><i class="ex plus"></i><svg class="icon"><use href="#wizard"/></svg><span>结构建模助手</span></div></li>
                        <li><div class="row"><i class="ex plus"></i><svg class="icon"><use href="#ucs"/></svg><span>定义用户坐标系</span></div></li>
                        <li><div class="row"><i class="ex plus"></i><svg class="icon"><use href="#grid"/></svg><span>定义轴网</span></div></li>
                        <li><div class="row"><i class="ex plus"></i><svg class="icon"><use href="#node"/></svg><span>节点</span></div></li>
                        <li><div class="row"><i class="ex plus"></i><svg class="icon"><use href="#elem"/></svg><span>单元</span></div></li>
                        <li><div class="row"><i class="ex minus"></i><svg class="icon"><use href="#prop"/></svg><span>材料和截面特性</span></div>
                            <ul>
                                <li><div class="row"><i class="ex"></i><svg class="icon"><use href="#mat"/></svg><span>材料</span></div></li>
                                <li><div class="row"><i class="ex"></i><svg class="icon"><use href="#mat2"/></svg><span>时间依存性</span></div></li>
                                <li><div class="row"><i class="ex"></i><svg class="icon"><use href="#mat3"/></svg><span>时间依存材</span></div></li>
                                <li><div class="row"><i class="ex"></i><svg class="icon"><use href="#mat4"/></svg><span>时间依存材</span></div></li>
                                <li><div class="row"><i class="ex"></i><svg class="icon"><use href="#mat5"/></svg><span>时间依存性</span></div></li>
                                <li><div class="row"><i class="ex"></i><svg class="icon"><use href="#mat6"/></svg><span>修改单元依</span></div></li>
                                <li><div class="row"><i class="ex"></i><svg class="icon"><use href="#plast"/></svg><span>塑性材料...</span></div></li>
                                <li><div class="row"><i class="ex"></i><svg class="icon"><use href="#sect"/></svg><span class="picked">截面</span></div></li>
                                <li><div class="row"><i class="ex"></i><svg class="icon"><use href="#sect2"/></svg><span>截面特性值</span></div></li>
                                <li><div class="row"><i class="ex"></i><svg class="icon"><use href="#rebar"/></svg><span>截面钢筋</span></div></li>
                                <li><div class="row"><i class="ex"></i><svg class="icon"><use href="#taper"/></svg><span>变截面组</span></div></li>
                                <li><div class="row"><i class="ex"></i><svg class="icon"><use href="#thick"/></svg><span>厚度</span></div></li>
                                <li><div class="row"><i class="ex"></i><svg class="icon"><use href="#hinge"/></svg><span>非弹性铰特</span></div></li>
                                <li><div class="row"><i class="ex"></i><svg class="icon"><use href="#hinge"/></svg><span>分配非弹性</span></div></li>
                                <li><div class="row"><i class="ex"></i><svg class="icon"><use href="#damp"/></svg><span>组阻尼比</span></div></li>
                                <li><div class="row"><i class="ex"></i><svg class="icon"><use href="#fib1"/></svg><span>纤维材料特</span></div></li>
                                <li><div class="row"><i class="ex"></i><svg class="icon"><use href="#fib2"/></svg><span>纤维截面分</span></div></li>
                            </ul>
                        </li>
                        <li><div class="row"><i class="ex plus"></i><svg class="icon"><use href="#support"/></svg><span>边界条件</span></div></li>
                        <li><div class="row"><i class="ex plus"></i><svg class="icon"><use href="#mass"/></svg><span>质量</span></div></li>
                        <li><div class="row"><i class="ex"></i>
                            <svg class="icon floors" viewBox="0 0 16 16"><path d="M8 2h8l-5 5H6z" fill="#fe6"/><path d="M5 8h11l-5 7H6z" fill="#5c5"/><text x="0" y="7">FL1</text><text x="0" y="15">FL2</text></svg>
                            <span>命名平面</span></div></li>
                        <li><div class="row"><i class="ex plus"></i><svg class="icon"><use href="#group"/></svg><span>组</span></div></li>
                    </ul>
                </li>
                <li><div class="row"><i class="ex plus"></i><svg class="icon"><use href="#load"/></svg><span>静力荷载</span></div></li>
                <li><div class="row"><i class="ex plus"></i><svg class="icon"><use href="#spectrum"/></svg><span>反应谱分析数据</span></div></li>
                <li><div class="row"><i class="ex plus"></i><svg class="icon"><use href="#time"/></svg><span>时程分析数据</span></div></li>
                <li><div class="row"><i class="ex plus"></i><svg class="icon"><use href="#car"/></svg><span>移动荷载分析</span></div></li>
                <li><div class="row"><i class="ex plus"></i><svg class="icon"><use href="#settle"/></svg><span>支座沉降分析数据</span></div></li>
                <li><div class="row"><i class="ex plus"></i><svg class="icon"><use href="#comp"/></svg><span>组合截面分析数据</span></div></li>
                <li><div class="row"><i class="ex plus"></i><svg class="icon"><use href="#env"/></svg><span>水化热分析数据</span></div></li>
                <li><div class="row"><i class="ex plus"></i><svg class="icon"><use href="#env"/></svg><span>非线性分析数据</span></div></li>
                <li><div class="row"><i class="ex plus"></i><svg class="icon"><use href="#stage"/></svg><span>施工阶段分析数据</span></div></li>
                <li><div class="row"><i class="ex plus"></i><svg class="icon"><use href="#result"/></svg><span>结果</span></div></li>
                <li><div class="row"><i class="ex plus"></i><svg class="icon"><use href="#design"/></svg><span>设计</span></div></li>
                <li><div class="row"><i class="ex plus"></i><svg class="icon"><use href="#query"/></svg><span>查询</span></div></li>
            </ul>
        </div>
        <div class="hscroll">
            <button class="sb" aria-label="向左"><svg><use href="#tl"/></svg></button>
            <span class="thumb wide"></span>
            <button class="sb end" aria-label="向右"><svg><use href="#tr"/></svg></button>
        </div>
    </aside>

    <div class="centre">
        <section class="doc">
            <div class="doc-tabs">
                <button class="plain" aria-label="上一个"><svg><use href="#ol"/></svg></button>
                <svg class="slope" viewBox="0 0 22 22"><path d="M0 22C6 20 12 2 22 .5V22z" fill="#e2f3e6"/><path d="M0 22C6 20 12 2 22 .5" fill="none" stroke="#1c3c6c"/></svg>
                <button class="doc-tab"><svg class="icon"><use href="#app"/></svg>模型窗口</button>
                <button class="plain end" aria-label="下一个"><svg><use href="#or"/></svg></button>
                <button class="plain" aria-label="关闭"><svg><use href="#x"/></svg></button>
            </div>
            <div class="view">
                <svg class="canvas">
                    <g transform="translate(-154 -155)" shape-rendering="crispEdges">
                        <!-- section outlines -->
                        <g fill="#ffff80" stroke="#a08830">
                            <path d="M150 376H601V405H538L504 417L447 646H277L219 417L184 405H150Z"/>
                            <path d="M607 376H1051V405H1024L990 417L932 646H762L705 417L671 405H607Z"/>
                        </g>
                        <g fill="#8f9fb7" stroke="#a08830">
                            <path d="M274 405H449L474 417L424 616H300L249 417Z"/>
                            <path d="M760 405H933L959 417L909 616H785L735 417Z"/>
                        </g>
                        <path d="M601 376h6v29h-6z" fill="#8c8c96" stroke="#8a7440"/>
                        <!-- guide lines -->
                        <g fill="none" stroke="#bfc1c6">
                            <path d="M154 375.500H839M154 405.500H839M154 417.500H839M154 616.500H839M154 646.500H839M361.500 376V646M839.500 376V646M1051 375.500H1071.500V405.500H1051"/>
                            <path d="M655 405L690 417L747 646M920 405L945 417L893 616"/>
                        </g>
                        <path d="M360 645h2v2h-2zM838 645h2v2h-2z" fill="#d06020"/>
                        <!-- cursor cross -->
                        <path d="M1159.500 155V760M154 732.500H1260" stroke="#5b5f60"/>
                        <g fill="none" stroke="#c9dadd" shape-rendering="auto">
                            <path d="M165.500 710.500h9l12 11-2 2 1 2-3 1 0 3-3-1-2 2-12-11z"/>
                            <path d="M169 713l12 13M172 713l12 11M168 717l11 11"/>
                            <path d="M206 750.500h-10l-12-11 2-2 0-3 3 0 1-3 3 1 2-2 11 11z"/>
                            <path d="M189 737l13 11M192 734l12 11M187 740l11 9"/>
                        </g>
                    </g>
                </svg>
            </div>
        </section>

        <section class="info">
            <div class="pane-head">
                <h2>信息窗口</h2>
                <button aria-label="固定"><svg><use href="#pin"/></svg></button>
                <button aria-label="关闭"><svg><use href="#x"/></svg></button>
            </div>
            <div class="log">
                <p>用自动保存功能保存项目。</p>
                <div class="vscroll">
                    <button class="sb" aria-label="向上"><svg><use href="#cu"/></svg></button>
                    <button class="sb" aria-label="向下"><svg><use href="#cd"/></svg></button>
                </div>
            </div>
            <input class="prompt" type="text" value="&gt;&gt;" aria-label="命令">
            <div class="sheet">
                <div class="sheet-tabs">
                    <button class="sb dim" aria-label="首个"><svg><use href="#first"/></svg></button>
                    <button class="sb dim" aria-label="上一个"><svg><use href="#prev"/></svg></button>
                    <button class="sb dim" aria-label="下一个"><svg><use href="#next"/></svg></button>
                    <button class="sb dim" aria-label="末个"><svg><use href="#last"/></svg></button>
                    <svg class="slash" viewBox="0 0 9 17"><path d="M2 0h7v17z" fill="#c8ecc8"/><path d="M2 0l6 17" stroke="#111"/></svg>
                    <button class="sheet-tab on">命令信息</button>
                    <svg class="slash" viewBox="0 0 9 17"><path d="M0 0h8L2 17H0z" fill="#c8ecc8"/><path d="M8 0L2 17M5 9l3 8" stroke="#111" fill="none"/></svg>
                    <button class="sheet-tab">分析信息</button>
                    <svg class="slash" viewBox="0 0 9 17"><path d="M8 0L2 17" stroke="#111"/></svg>
                </div>
                <div class="hscroll">
                    <button class="sb" aria-label="向左"><svg><use href="#tl"/></svg></button>
                    <span class="thumb"></span>
                    <button class="sb end" aria-label="向右"><svg><use href="#tr"/></svg></button>
                </div>
            </div>
        </section>
    </div>

    <div class="rail-wrap">
        <div class="rail">
            <span class="hgrip"></span>
            <button class="tb" aria-label="全部缩放"><svg class="icon"><use href="#zfit"/></svg></button>
            <button class="tb" aria-label="窗口缩放"><svg class="icon"><use href="#zwin"/></svg></button>
            <button class="tb" aria-label="放大"><svg class="icon"><use href="#zin"/></svg></button>
            <button class="tb" aria-label="缩小"><svg class="icon"><use href="#zout"/></svg></button>
            <button class="tb" aria-label="自动对齐"><svg class="icon"><use href="#zauto"/></svg></button>
            <span class="hsep"></span>
            <button class="tb" aria-label="左移"><svg class="icon"><use href="#left"/></svg></button>
            <button class="tb" aria-label="右移"><svg class="icon"><use href="#right"/></svg></button>
            <button class="tb" aria-label="上移"><svg class="icon"><use href="#up"/></svg></button>
            <button class="tb" aria-label="下移"><svg class="icon"><use href="#down"/></svg></button>
            <span class="hgrip"></span>
            <button class="tb" aria-label="渲染"><svg class="icon"><use href="#bridge"/></svg></button>
            <button class="tb" aria-label="视点"><svg class="icon"><use href="#flag"/></svg></button>
            <span class="hsep"></span>
            <button class="tb" aria-label="标准视图"><svg class="icon"><use href="#iso"/></svg></button>
            <button class="tb" aria-label="顶面"><svg class="icon"><use href="#top"/></svg></button>
            <button class="tb" aria-label="左面"><svg class="icon"><use href="#lside"/></svg></button>
            <button class="tb" aria-label="正面"><svg class="icon"><use href="#front"/></svg></button>
            <button class="tb" aria-label="任意角度"><svg class="icon"><use href="#persp"/></svg></button>
            <span class="hsep"></span>
            <button class="tb" aria-label="向下旋转"><svg class="icon"><use href="#rdown"/></svg></button>
            <button class="tb" aria-label="向上旋转"><svg class="icon"><use href="#rup"/></svg></button>
            <button class="tb" aria-label="向左旋转"><svg class="icon"><use href="#rleft"/></svg></button>
            <button class="tb" aria-label="向右旋转"><svg class="icon"><use href="#rright"/></svg></button>
            <span class="hsep"></span>
            <button class="tb" aria-label="前次视图"><svg class="icon"><use href="#cam"/></svg></button>
            <button class="tb" aria-label="命名视图"><svg class="icon"><use href="#cam2"/></svg></button>
            <span class="hgrip"></span>
            <button class="tb" aria-label="动态缩放"><svg class="icon"><use href="#zdyn"/></svg></button>
            <button class="tb" aria-label="动态平移"><svg class="icon"><use href="#pan"/></svg></button>
            <button class="tb" aria-label="动态旋转"><svg class="icon"><use href="#rot"/></svg></button>
        </div>
    </div>
</main>

<footer class="status">
    <span class="help">如想查找帮助, 请按F1键</span>
    <span class="none">无!</span>
    <span class="coord">U: -60, 7.05, 0</span>
    <span class="coord">G: -60, 7.05, 0</span>
    <select class="unit" aria-label="力"><option>tonf</option></select>
    <select class="unit" aria-label="长度"><option>m</option></select>
    <button class="st first" aria-label="捕捉点"><svg class="icon"><use href="#target"/></svg></button>
    <button class="st" aria-label="捕捉网格"><svg class="icon"><use href="#snap"/></svg></button>
    <button class="st dim" aria-label="运行"><svg class="icon"><use href="#next"/></svg></button>
    <select class="unit small" aria-label="过滤"><option>none</option></select>
    <button class="ask">?</button>
    <span class="cyan"></span>
    <span class="spin off"><input type="text" value="" aria-label="当前"><i></i></span>
    <span>/</span>
    <span class="spin"><input type="text" value="2" aria-label="总数"><i></i></span>
</footer>

<div class="taskbar">
    <button class="start"><svg><use href="#win"/></svg>开始</button>
    <div class="quick">
        <a href="#" aria-label="浏览器"><svg class="icon"><use href="#ie"/></svg></a>
        <a href="#" aria-label="桌面"><svg class="icon"><use href="#desk"/></svg></a>
        <a href="#" aria-label="查看器"><svg class="icon"><use href="#quick"/></svg></a>
    </div>
    <button class="task cjk"><svg class="icon"><use href="#folder"/></svg>桥型图</button>
    <button class="task"><svg class="icon"><use href="#folder"/></svg>Getting Started</button>
    <button class="task"><svg class="icon"><use href="#pdf"/></svg>01_GS_Civil.pdf ...</button>
    <button class="task"><svg class="icon"><use href="#disk"/></svg>STORAGE (F:)</button>
    <button class="task"><svg class="icon"><use href="#disk"/></svg>jiao (H:)</button>
    <button class="task on"><svg class="icon"><use href="#app"/></svg>Civil 2006-LAN -...</button>
    <svg class="icon kbd"><use href="#kbd"/></svg>
    <div class="tray">
        <svg class="icon"><use href="#chev"/></svg>
        <svg class="icon"><use href="#usb"/></svg>
        <svg class="icon"><use href="#tray"/></svg>
        <time>22:15</time>
    </div>
</div>

</body>
</html>
```

FILE: styles.css
```css
* {
    box-sizing: border-box;
}

body {
    margin: 0;
    height: 100vh;
    display: flex;
    flex-direction: column;
    overflow: hidden;
    background: #9ebeef;
    color: #000;
    font: 12px/16px "Liberation Sans", "Noto Sans CJK SC", sans-serif;
}

h1, h2, p, ul {
    margin: 0;
    padding: 0;
    font-size: 12px;
    font-weight: normal;
}

button, input, select {
    font: inherit;
    color: inherit;
    margin: 0;
    padding: 0;
    border: 0;
    border-radius: 0;
    background: none;
}

a {
    color: inherit;
    text-decoration: none;
}

.sprite {
    position: absolute;
    width: 0;
    height: 0;
}

svg {
    display: block;
    width: 16px;
    height: 16px;
    flex: none;
}

.dim {
    color: #a09e94;
}

/* Title bar */
.titlebar {
    display: flex;
    align-items: center;
    gap: 2px;
    height: 26px;
    flex: none;
    padding: 0 2px;
    background: linear-gradient(#3c98ff, #0a5cf0 12%, #0054e3 45%, #0066ff 85%, #0040c8);
}

.titlebar h1 {
    flex: 1;
    padding-left: 2px;
    color: #fff;
    font: bold 13px/20px "Liberation Mono", "Noto Sans CJK SC", monospace;
    text-shadow: 1px 1px 0 #0a2a80;
    white-space: nowrap;
}

.win-btn {
    display: flex;
    align-items: center;
    justify-content: center;
    width: 21px;
    height: 21px;
    border: 1px solid #fff;
    border-radius: 3px;
    background: linear-gradient(135deg, #7aa4f8, #2458d8 60%, #3a78f0);
    color: #fff;
}

.win-close {
    background: linear-gradient(135deg, #f0a088, #dc4820 60%, #e86038);
}

/* Menu bar */
.menubar {
    display: flex;
    align-items: center;
    height: 24px;
    flex: none;
    padding: 0 4px;
}

.menubar a {
    padding: 0 8px;
    line-height: 18px;
}

.menubar .logo {
    width: 19px;
    height: 18px;
    margin-left: 2px;
}

.mdi {
    display: flex;
    gap: 5px;
    margin-left: auto;
    padding-top: 6px;
}

.mdi svg {
    width: 10px;
    height: 10px;
}

.mdi .dim {
    color: #7c88a0;
}

.grip {
    width: 2px;
    height: 14px;
    margin-right: 1px;
    flex: none;
    background: repeating-linear-gradient(#34466e 0 2px, transparent 2px 4px);
}

.grip.tall {
    height: 40px;
    margin: 4px 3px 0 3px;
}

/* Tabbed toolbars */
.bands {
    display: flex;
    gap: 3px;
    height: 53px;
    flex: none;
    padding: 1px 0 1px 1px;
}

.band {
    display: flex;
    border-bottom: 1px solid #4a6eb0;
    border-right: 2px solid #c4dcfa;
    background: linear-gradient(90deg, #dbe8fb, #9ebeef 12px);
}

.band-wide {
    width: 683px;
}

.band-body {
    flex: 1;
    display: flex;
    flex-direction: column;
    padding-bottom: 2px;
}

.tabs {
    display: flex;
    height: 21px;
    flex: none;
    border-top: 1px solid #dcebff;
    background: linear-gradient(#8fb0e6, #e2edfc);
}

.tab {
    padding: 0 6px;
    margin: 3px 0;
    border-right: 1px solid #a3b3d0;
    color: #7d8798;
    line-height: 14px;
    white-space: nowrap;
}

.tab.on {
    margin: 1px 0 0;
    border-right-color: #26437c;
    background: linear-gradient(#f4fbff, #b4d6fa);
    color: #000;
}

.tools {
    display: flex;
    align-items: center;
    flex: 1;
    padding: 0 0 0 5px;
    background: linear-gradient(#c4dafa, #dfeafc 40%, #84abe2);
    border-bottom: 2px solid #cfe6fb;
}

.band-wide .tools {
    padding-left: 2px;
}

.tb {
    display: flex;
    align-items: center;
    justify-content: center;
    width: 22px;
    height: 22px;
    flex: none;
}

.tb.on {
    border: 1px solid #2c3c6c;
    background: #fbb065;
}

.tb.split {
    justify-content: flex-start;
    width: 35px;
    padding-left: 4px;
}

.drop {
    width: 8px;
    margin-left: 3px;
}

.sep {
    width: 2px;
    height: 14px;
    margin: 0 3px;
    flex: none;
    background: #7e9fd4;
    border-right: 1px solid #f2f7ff;
}

.combo {
    width: 115px;
    height: 18px;
    appearance: none;
    margin: 0 3px;
    padding: 0 16px 0 2px;
    background: url("data:image/svg+xml,%3Csvg xmlns='http://www.w3.org/2000/svg' width='13' height='18'%3E%3Cpath d='M0 0h13v18H0z' fill='%23b5ccf2'/%3E%3Cpath d='M4 8h6l-3 3z'/%3E%3C/svg%3E") right center no-repeat #c7ebc5;
}

.stage-combo {
    width: 146px;
    margin-left: 0;
}

/* Second toolbar row */
.toolrow {
    display: flex;
    gap: 3px;
    height: 26px;
    flex: none;
    padding-left: 3px;
}

.strip {
    display: flex;
    align-items: center;
    padding: 0 0 0 2px;
    border-radius: 2px;
    border-bottom: 1px solid #4a6eb0;
    background: linear-gradient(#e2ecfc, #cbdcf8 50%, #8fb2e8);
}

.strip .grip {
    margin: 0 3px 0 0;
}

/* Workspace */
.workspace {
    display: grid;
    grid-template-columns: 146px minmax(0, 1fr) 27px;
    flex: 1;
    min-height: 0;
}

.side {
    display: flex;
    flex-direction: column;
    min-height: 0;
    padding: 0 2px 3px 2px;
    border-right: 1px solid #78a0e0;
    background: #b9d2f6;
}

.pane-head {
    display: flex;
    align-items: center;
    height: 22px;
    flex: none;
    padding: 0 0 0 2px;
    background: linear-gradient(#dce8fc, #90b2ea);
}

.pane-head h2 {
    flex: 1;
}

.side-tabs {
    height: 22px;
}

.tree {
    flex: 1;
    min-height: 0;
    overflow: hidden;
    background: #d2e0f7;
}

/* the dotted trunk stops at the middle of the last row */
.tree ul {
    list-style: none;
    background: repeating-linear-gradient(#99a2b4 0 1px, transparent 1px 2px) 9px 0 / 1px calc(100% - 9px) no-repeat;
}

.tree ul ul {
    margin-left: 20px;
}

.row {
    display: flex;
    align-items: center;
    height: 18px;
    white-space: nowrap;
}

.row .icon {
    margin-right: 2px;
}

.row span {
    padding: 0 2px;
    line-height: 17px;
}

.row .picked {
    background: #fff;
}

.floors text {
    font: bold 7px "Liberation Sans", sans-serif;
}

.ex {
    width: 22px;
    height: 11px;
    flex: none;
    background: repeating-linear-gradient(90deg, #99a2b4 0 1px, transparent 1px 2px) 10px 5px / 11px 1px no-repeat;
}

.ex.plus, .ex.minus {
    width: 11px;
    margin: 0 7px 0 4px;
    border: 1px solid #98a4b4;
    background: linear-gradient(#000, #000) 2px 4px / 5px 1px no-repeat, #fff;
}

.ex.plus {
    background: linear-gradient(#000, #000) 2px 4px / 5px 1px no-repeat, linear-gradient(#000, #000) 4px 2px / 1px 5px no-repeat, #fff;
}

/* Scroll bars */
.sb {
    display: flex;
    align-items: center;
    justify-content: center;
    width: 17px;
    height: 17px;
    flex: none;
    border: 1px solid;
    border-color: #fff #85826f #85826f #fff;
    background: #ece9d8;
}

.sb svg {
    color: #000;
}

.sb.dim svg {
    color: #a09e94;
}

.hscroll {
    display: flex;
    height: 17px;
    flex: none;
    background: #f5f3ea;
}

.thumb {
    width: 17px;
    border: 1px solid;
    border-color: #fff #85826f #85826f #fff;
    background: #ece9d8;
}

.thumb.wide {
    width: 62px;
}

.end {
    margin-left: auto;
}

/* Model window */
.centre {
    display: flex;
    flex-direction: column;
    min-width: 0;
    min-height: 0;
    gap: 6px;
    margin-left: 5px;
}

.doc {
    flex: 1;
    display: flex;
    flex-direction: column;
    min-height: 0;
}

.doc-tabs {
    display: flex;
    align-items: flex-end;
    height: 24px;
    flex: none;
    padding-right: 5px;
    background: linear-gradient(#9ebeef, #dce9fc);
}

.plain {
    padding: 4px 1px;
}

.slope {
    width: 22px;
    height: 22px;
}

.doc-tab {
    display: flex;
    align-items: center;
    gap: 8px;
    height: 22px;
    padding: 0 11px 0 0;
    border: 1px solid #1c3c6c;
    border-width: 1px 1px 0 0;
    border-radius: 0 3px 0 0;
    background: linear-gradient(#f2faf4, #cbe9d0);
    font-size: 13px;
    font-weight: bold;
}

.view {
    flex: 1;
    min-height: 0;
    border: 2px solid #cfe8dc;
    border-width: 1px 3px 3px 2px;
    background: #8f9fb7;
}

.canvas {
    width: 100%;
    height: 100%;
    border: 1px solid #6c7460;
    border-width: 1px 0 0 1px;
}

/* Message window */
.info {
    display: flex;
    flex-direction: column;
    height: 208px;
    flex: none;
    background: #ece9d8;
}

.log {
    display: flex;
    justify-content: space-between;
    flex: 1;
    margin: 1px 0;
    border: 2px solid #77756a;
    border-width: 2px 0 0 2px;
    background: #d2e0f7;
}

.log p {
    padding: 1px;
}

.vscroll {
    display: flex;
    flex-direction: column;
    justify-content: space-between;
    margin-right: 2px;
    background: #f5f3ea;
}

.prompt {
    width: 100%;
    height: 20px;
    padding: 0 2px;
    border: 1px solid #77756a;
    border-width: 2px 0 0 2px;
    background: #d2e0f7;
}

.sheet {
    display: flex;
    height: 19px;
    padding-bottom: 1px;
    flex: none;
    border-bottom: 1px solid #8a887c;
}

.sheet-tabs {
    display: flex;
    width: 67%;
    border-top: 1px solid #000;
    border-right: 1px solid #000;
}

.sheet-tabs .sb {
    width: 18px;
    border-right-color: #555;
}

.slash {
    width: 9px;
    height: 17px;
}

.sheet-tab {
    padding: 0 4px;
    line-height: 16px;
}

.sheet-tab.on {
    padding: 0 3px 0 1px;
    background: #c8ecc8;
    font-size: 13px;
    font-weight: bold;
}

.sheet .hscroll {
    flex: 1;
    margin-left: 3px;
}

/* View toolbar on the right */
.rail-wrap {
    padding-left: 2px;
}

.rail {
    display: flex;
    flex-direction: column;
    align-items: center;
    width: 24px;
    border-radius: 2px;
    background: linear-gradient(90deg, #e2ecfc, #c0d5f6 55%, #86aae2);
}

.hgrip {
    width: 14px;
    height: 2px;
    margin: 4px 0 5px;
    background: repeating-linear-gradient(90deg, #34466e 0 2px, transparent 2px 4px);
}

.hsep {
    width: 16px;
    height: 2px;
    margin: 3px 0;
    background: #7e9fd4;
    border-bottom: 1px solid #f2f7ff;
}

/* Status bar */
.status {
    display: flex;
    align-items: center;
    height: 20px;
    flex: none;
    padding: 0 7px 0 4px;
    border-top: 1px solid #f8f7f0;
    background: #ece9d8;
}

.help {
    flex: 1;
}

.none {
    width: 58px;
}

.coord {
    width: 164px;
    padding-left: 4px;
    border-left: 1px solid #c5c2b0;
    box-shadow: inset 1px 0 #fff;
}

.unit {
    width: 47px;
    height: 19px;
    margin-right: 5px;
    appearance: none;
    padding: 0 14px 0 1px;
    border: 1px solid #85826f;
    background: url("data:image/svg+xml,%3Csvg xmlns='http://www.w3.org/2000/svg' width='15' height='17'%3E%3Cpath d='M0 0h15v17H0z' fill='%23ece9d8'/%3E%3Cpath d='M14 0v16H0' fill='none' stroke='%2385826f'/%3E%3Cpath d='M4 7h7l-3 4z'/%3E%3C/svg%3E") right center no-repeat #c7ebc5;
}

.unit.small {
    width: 41px;
    margin: 0 8px 0 5px;
    background-color: #ece9d8;
    font-family: "Liberation Serif", serif;
}

.st {
    width: 19px;
    height: 18px;
    margin-right: 4px;
    padding-left: 1px;
    border: 1px solid;
    border-color: #fff #85826f #85826f #fff;
}

.st.dim {
    margin-right: 0;
    border-color: #fff #85826f #85826f #fff;
}

.st.first {
    margin-left: 3px;
}

.ask {
    width: 18px;
    height: 18px;
    border: 2px solid #5cd8e8;
    background: #fff;
    font: bold 12px/13px "Liberation Mono", monospace;
}

.cyan {
    width: 18px;
    height: 18px;
    margin: 0 2px 0 5px;
    background: #0ff;
}

.spin {
    display: flex;
    align-items: center;
    width: 47px;
    height: 18px;
    margin-left: 6px;
    border: 1px solid #85826f;
    border-right: 0;
    background: #c7ebc5;
}

.spin.off {
    width: 33px;
    margin: 0 4px 0 0;
    background: #ece9d8;
}

.spin input {
    width: 100%;
    min-width: 0;
    text-align: center;
}

.spin i {
    width: 16px;
    height: 16px;
    flex: none;
    border: 1px solid;
    border-color: #fff #85826f #85826f #fff;
    background: url("data:image/svg+xml,%3Csvg xmlns='http://www.w3.org/2000/svg' width='14' height='14'%3E%3Cpath d='M0 7h14' stroke='%2385826f'/%3E%3Cpath d='M5 5h4L7 2zM5 9h4l-2 3z'/%3E%3C/svg%3E") center no-repeat #ece9d8;
}

/* Task bar */
.taskbar {
    display: flex;
    align-items: center;
    gap: 2px;
    height: 30px;
    flex: none;
    background: linear-gradient(#3f8cf3, #245edb 12%, #2663e0 80%, #1941a5);
    color: #fff;
}

.start {
    display: flex;
    align-items: center;
    gap: 7px;
    width: 96px;
    height: 30px;
    padding-left: 10px;
    border-radius: 0 10px 10px 0;
    background: linear-gradient(#5eac56, #3c873c 20%, #3a9038 75%, #2a6a2a);
    box-shadow: 2px 0 3px #173c94;
    font-size: 18px;
    font-style: italic;
    text-shadow: 1px 1px 1px #1b421b;
}

.start svg {
    width: 20px;
    height: 20px;
}

.quick {
    display: flex;
    gap: 7px;
    width: 82px;
    padding-left: 10px;
}

.task {
    display: flex;
    align-items: center;
    gap: 4px;
    flex: 0 1 158px;
    min-width: 0;
    height: 24px;
    padding-left: 9px;
    border-radius: 3px;
    background: linear-gradient(#5a9cf8, #3a7ff2 15%, #3a80f4 85%, #2a64d8);
    font: 10px/16px "Liberation Mono", "Noto Sans CJK SC", monospace;
    white-space: nowrap;
}

.task.cjk {
    font-size: 12px;
}

.task.on {
    background: #1e50b8;
    box-shadow: inset 1px 1px 2px #0c2f80;
}

.kbd {
    margin-left: 8px;
}

.tray {
    display: flex;
    align-items: center;
    gap: 2px;
    height: 30px;
    margin-left: auto;
    padding: 0 13px 0 0;
    background: linear-gradient(#18b8f4, #1290e8 15%, #128ee8 80%, #0d6cc0);
}

.tray time {
    padding-left: 5px;
}
```
